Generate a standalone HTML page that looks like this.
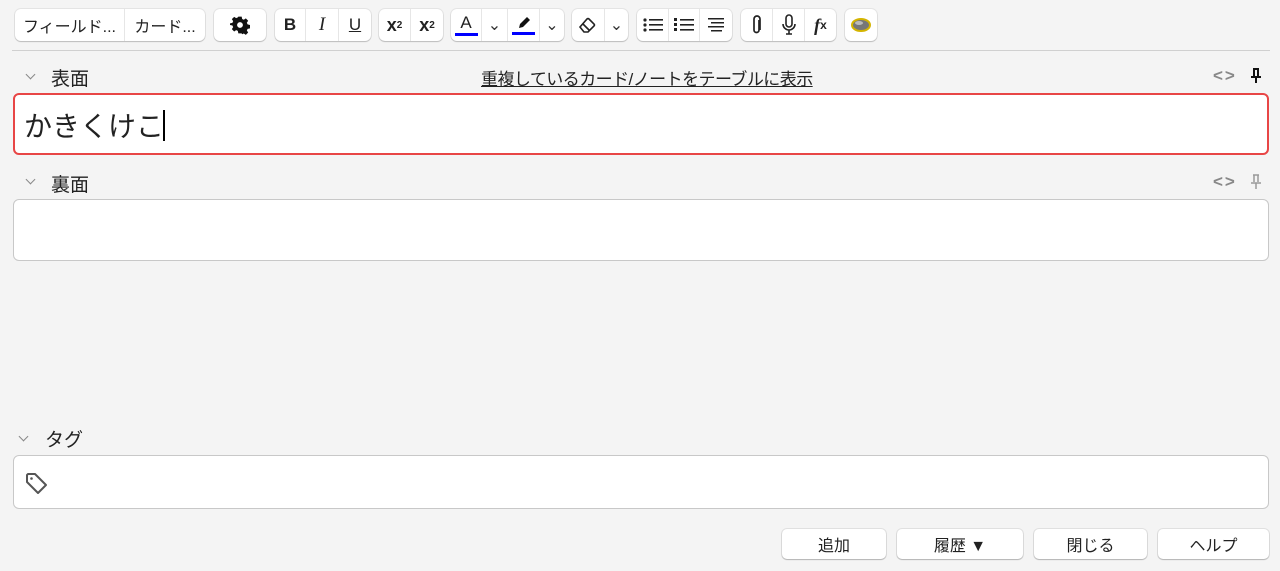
<!DOCTYPE html>
<html><head><meta charset="utf-8"><style>
*{box-sizing:border-box}
body{margin:0;width:1280px;height:571px;background:#f4f4f4;font-family:"Liberation Sans","Noto Sans CJK JP",sans-serif;color:#222;position:relative;overflow:hidden}
.a{position:absolute}
.g{position:absolute;top:9px;height:32px;background:#fff;border-radius:6px;box-shadow:0 1px 1px rgba(0,0,0,.18),0 0 0 1px #e4e4e4;display:flex;overflow:hidden}
.g>div{height:32px;display:flex;align-items:center;justify-content:center;border-right:1px solid #e6e6e6;font-size:16px}
.g>div:last-child{border-right:none}
.lbl{position:absolute;font-size:19px;color:#222}
.chev{position:absolute;width:7px;height:7px;border-right:1.5px solid #888;border-bottom:1.5px solid #888;transform:rotate(45deg)}
.fld{position:absolute;left:13px;width:1256px;background:#fff;border:1px solid #c8c8c8;border-radius:6px}
.btn{position:absolute;top:529px;height:30px;background:#fff;border-radius:5px;box-shadow:0 1px 1px rgba(0,0,0,.2),0 0 0 1px #e0e0e0;font-size:16px;display:flex;align-items:center;justify-content:center}
.dd{font-size:11px;color:#333}
.code{position:absolute;font-size:17px;color:#888;letter-spacing:2px;font-weight:bold}
</style></head><body>
<div class="g" style="left:15px;width:190px"><div style="width:110px">フィールド...</div><div style="width:80px">カード...</div></div>
<div class="g" style="left:214px;width:52px"><div style="width:52px"><svg width="20" height="20" viewBox="0 0 24 24"><path fill="#111" d="M12 8.5a3.5 3.5 0 1 0 0 7a3.5 3.5 0 0 0 0-7zM10 2h4l.6 2.8 2 .9 2.4-1.6 2.8 2.8-1.6 2.4.9 2 2.9.7v4l-2.9.6-.9 2 1.6 2.4-2.8 2.8-2.4-1.6-2 .9L14 22h-4l-.6-2.9-2-.9-2.4 1.6-2.8-2.8 1.6-2.4-.9-2L0 12.000V10l2.9-.6.9-2L2.2 5 5 2.2l2.4 1.6 2-.9z" fill-rule="evenodd"/></svg></div></div>
<div class="g" style="left:275px;width:96px"><div style="width:31px;font-weight:bold;font-size:17px">B</div><div style="width:33px;font-style:italic;font-family:'Liberation Serif',serif;font-size:19px">I</div><div style="width:32px;text-decoration:underline;font-size:17px">U</div></div>
<div class="g" style="left:379px;width:64px"><div style="width:32px;font-size:18px;font-weight:bold">x<sup style="font-size:10px">2</sup></div><div style="width:32px;font-size:18px;font-weight:bold">x<sub style="font-size:10px">2</sub></div></div>
<div class="g" style="left:451px;width:113px"><div style="width:31px;flex-direction:column"><span style="font-size:17px;line-height:17px">A</span><span style="width:23px;height:3px;background:#00f;margin-top:2px"></span></div><div style="width:26px" class="dd">&#8964;</div><div style="width:32px;flex-direction:column"><svg width="16" height="16" viewBox="0 0 16 16"><path d="M3 13l1-4 7-7 3 3-7 7z" fill="#111"/></svg><span style="width:23px;height:3px;background:#00f;margin-top:1px"></span></div><div style="width:24px" class="dd">&#8964;</div></div>
<div class="g" style="left:572px;width:56px"><div style="width:33px"><svg width="20" height="18" viewBox="0 0 20 18"><path d="M2 11l7-8a1.5 1.5 0 0 1 2 0l5 5a1.5 1.5 0 0 1 0 2l-6 6H6z M5 8l6 6" fill="none" stroke="#222" stroke-width="1.6"/></svg></div><div style="width:23px" class="dd">&#8964;</div></div>
<div class="g" style="left:637px;width:95px"><div style="width:32px"><svg width="22" height="16"><g fill="#222"><circle cx="3" cy="3" r="1.6"/><circle cx="3" cy="8" r="1.6"/><circle cx="3" cy="13" r="1.6"/><rect x="7" y="2" width="14" height="1.6"/><rect x="7" y="7" width="14" height="1.6"/><rect x="7" y="12" width="14" height="1.6"/></g></svg></div><div style="width:31px"><svg width="22" height="16"><g fill="#222"><rect x="1" y="1" width="3" height="3"/><rect x="1" y="6" width="3" height="3"/><rect x="1" y="11" width="3" height="3"/><rect x="7" y="2" width="14" height="1.6"/><rect x="7" y="7" width="14" height="1.6"/><rect x="7" y="12" width="14" height="1.6"/></g></svg></div><div style="width:32px"><svg width="20" height="16"><g fill="#222"><rect x="2" y="1" width="16" height="1.5"/><rect x="5" y="5" width="13" height="1.5"/><rect x="2" y="9" width="16" height="1.5"/><rect x="5" y="13" width="11" height="1.5"/></g></svg></div></div>
<div class="g" style="left:741px;width:95px"><div style="width:32px"><svg width="14" height="20" viewBox="0 0 14 20"><path d="M9 5v10a2.5 2.5 0 0 1-5 0V4a3 3 0 0 1 6 0v11" fill="none" stroke="#222" stroke-width="1.7"/></svg></div><div style="width:32px"><svg width="16" height="22" viewBox="0 0 16 22"><rect x="5" y="1" width="6" height="12" rx="3" fill="none" stroke="#222" stroke-width="1.6"/><path d="M2 10a6 6 0 0 0 12 0M8 16v4M5 20h6" fill="none" stroke="#222" stroke-width="1.6"/></svg></div><div style="width:31px;font-style:italic;font-weight:bold;font-family:'Liberation Serif',serif;font-size:18px">f<span style="font-size:12px;font-style:normal;font-family:'Liberation Sans'">x</span></div></div>
<div class="g" style="left:845px;width:32px"><div style="width:32px"><svg width="22" height="16"><ellipse cx="11" cy="8" rx="9" ry="6" fill="#777" stroke="#d4b400" stroke-width="2"/><ellipse cx="9" cy="6" rx="4" ry="2" fill="#bbb"/></svg></div></div>
<div class="a" style="left:12px;top:50px;width:1258px;height:1px;background:#d0d0d0"></div>

<div class="chev" style="left:27px;top:71px"></div>
<div class="lbl" style="left:51px;top:64px">表面</div>
<div class="a" style="left:481px;top:65px;font-size:17px;letter-spacing:-0.55px;text-decoration:underline;color:#222">重複しているカード/ノートをテーブルに表示</div>
<div class="code" style="left:1213px;top:66px">&lt;&gt;</div>
<svg class="a" style="left:1250px;top:68px" width="12" height="16" viewBox="0 0 12 16"><path d="M3 1h6M4 1v7M8 1v7M1 9h10M6 9v6" stroke="#111" stroke-width="2" fill="none"/></svg>
<div class="fld" style="top:93px;height:62px;border:2px solid #e84646"><span class="a" style="left:9px;top:10px;font-size:28px;color:#222">かきくけこ</span><span class="a" style="left:148px;top:15px;width:1.5px;height:31px;background:#000"></span></div>

<div class="chev" style="left:27px;top:176px"></div>
<div class="lbl" style="left:51px;top:170px">裏面</div>
<div class="code" style="left:1213px;top:172px">&lt;&gt;</div>
<svg class="a" style="left:1250px;top:174px" width="12" height="16" viewBox="0 0 12 16"><path d="M3 1h6M4 1v7M8 1v7M1 9h10M6 9v6" stroke="#999" stroke-width="1.5" fill="none"/></svg>
<div class="fld" style="top:199px;height:62px"></div>

<div class="chev" style="left:20px;top:433px"></div>
<div class="lbl" style="left:45px;top:425px">タグ</div>
<div class="fld" style="top:455px;height:54px"><svg class="a" style="left:11px;top:16px" width="24" height="24" viewBox="0 0 24 24"><path d="M2 3v7l11 11 8-8L10 2H3z" fill="none" stroke="#555" stroke-width="2" stroke-linejoin="round"/><circle cx="6.5" cy="6.5" r="1.3" fill="#555"/></svg></div>

<div class="btn" style="left:782px;width:104px">追加</div>
<div class="btn" style="left:897px;width:126px">履歴 ▼</div>
<div class="btn" style="left:1034px;width:113px">閉じる</div>
<div class="btn" style="left:1158px;width:111px">ヘルプ</div>
</body></html>
